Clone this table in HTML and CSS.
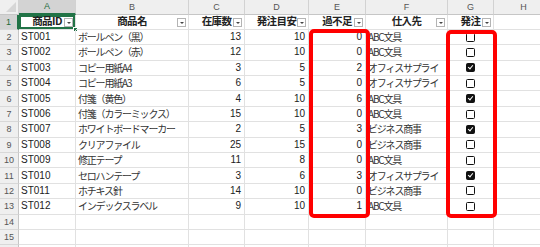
FILE: index.html
```html
<!DOCTYPE html>
<html lang="ja">
<head>
<meta charset="utf-8">
<title>在庫表</title>
<link rel="stylesheet" href="styles.css">
</head>
<body>
<div class="wrap">
  <div class="sheet">
    <div class="ch corner"><span class="tri"></span></div>
    <div class="ch sel">A</div><div class="ch">B</div><div class="ch">C</div><div class="ch">D</div><div class="ch">E</div><div class="ch">F</div><div class="ch">G</div><div class="ch">H</div>

    <div class="rh sel">1</div>
    <div class="c hd active">商品ID<span class="fb"></span></div>
    <div class="c hd">商品名<span class="fb"></span></div>
    <div class="c hd">在庫数<span class="fb"></span></div>
    <div class="c hd">発注目安<span class="fb"></span></div>
    <div class="c hd">過不足<span class="fb"></span></div>
    <div class="c hd">仕入先<span class="fb"></span></div>
    <div class="c hd">発注<span class="fb"></span></div>
    <div class="c"></div>

    <div class="rh">2</div><div class="c">ST001</div><div class="c jp">ボールペン（黒）</div><div class="c n">13</div><div class="c n">10</div><div class="c n">0</div><div class="c jp">ABC文具</div><div class="c cb"><span class="box"></span></div><div class="c"></div>
    <div class="rh">3</div><div class="c">ST002</div><div class="c jp">ボールペン（赤）</div><div class="c n">12</div><div class="c n">10</div><div class="c n">0</div><div class="c jp">ABC文具</div><div class="c cb"><span class="box"></span></div><div class="c"></div>
    <div class="rh">4</div><div class="c">ST003</div><div class="c jp">コピー用紙A4</div><div class="c n">3</div><div class="c n">5</div><div class="c n">2</div><div class="c jp">オフィスサプライ</div><div class="c cb"><span class="box on"></span></div><div class="c"></div>
    <div class="rh">5</div><div class="c">ST004</div><div class="c jp">コピー用紙A3</div><div class="c n">6</div><div class="c n">5</div><div class="c n">0</div><div class="c jp">オフィスサプライ</div><div class="c cb"><span class="box"></span></div><div class="c"></div>
    <div class="rh">6</div><div class="c">ST005</div><div class="c jp">付箋（黄色）</div><div class="c n">4</div><div class="c n">10</div><div class="c n">6</div><div class="c jp">ABC文具</div><div class="c cb"><span class="box on"></span></div><div class="c"></div>
    <div class="rh">7</div><div class="c">ST006</div><div class="c jp">付箋（カラーミックス）</div><div class="c n">15</div><div class="c n">10</div><div class="c n">0</div><div class="c jp">ABC文具</div><div class="c cb"><span class="box"></span></div><div class="c"></div>
    <div class="rh">8</div><div class="c">ST007</div><div class="c jp">ホワイトボードマーカー</div><div class="c n">2</div><div class="c n">5</div><div class="c n">3</div><div class="c jp">ビジネス商事</div><div class="c cb"><span class="box on"></span></div><div class="c"></div>
    <div class="rh">9</div><div class="c">ST008</div><div class="c jp">クリアファイル</div><div class="c n">25</div><div class="c n">15</div><div class="c n">0</div><div class="c jp">ビジネス商事</div><div class="c cb"><span class="box"></span></div><div class="c"></div>
    <div class="rh">10</div><div class="c">ST009</div><div class="c jp">修正テープ</div><div class="c n">11</div><div class="c n">8</div><div class="c n">0</div><div class="c jp">ABC文具</div><div class="c cb"><span class="box"></span></div><div class="c"></div>
    <div class="rh">11</div><div class="c">ST010</div><div class="c jp">セロハンテープ</div><div class="c n">3</div><div class="c n">6</div><div class="c n">3</div><div class="c jp">オフィスサプライ</div><div class="c cb"><span class="box on"></span></div><div class="c"></div>
    <div class="rh">12</div><div class="c">ST011</div><div class="c jp">ホチキス針</div><div class="c n">14</div><div class="c n">10</div><div class="c n">0</div><div class="c jp">ビジネス商事</div><div class="c cb"><span class="box"></span></div><div class="c"></div>
    <div class="rh">13</div><div class="c">ST012</div><div class="c jp">インデックスラベル</div><div class="c n">9</div><div class="c n">10</div><div class="c n">1</div><div class="c jp">ABC文具</div><div class="c cb"><span class="box"></span></div><div class="c"></div>
    <div class="rh">14</div><div class="c"></div><div class="c"></div><div class="c"></div><div class="c"></div><div class="c"></div><div class="c"></div><div class="c"></div><div class="c"></div>
    <div class="rh">15</div><div class="c"></div><div class="c"></div><div class="c"></div><div class="c"></div><div class="c"></div><div class="c"></div><div class="c"></div><div class="c"></div>
    <div class="rh"></div><div class="c"></div><div class="c"></div><div class="c"></div><div class="c"></div><div class="c"></div><div class="c"></div><div class="c"></div><div class="c"></div>
  </div>
  <div class="mark mark-e"></div>
  <div class="mark mark-g"></div>
</div>
</body>
</html>
```
FILE: styles.css
```css
html, body {
  margin: 0;
  padding: 0;
  background: #ffffff;
  overflow: hidden;
}
.wrap {
  position: relative;
  width: 540px;
  height: 247px;
  overflow: hidden;
}
.sheet {
  display: grid;
  grid-template-columns: 19px 57px 113px 56px 64px 57px 82px 46px 60px;
  grid-template-rows: 14.5px;
  grid-auto-rows: 15.4px;
  font-family: "Liberation Sans", "Noto Sans CJK JP", sans-serif;
  font-size: 10px;
  color: #222222;
}
.ch {
  background: #efefef;
  border-right: 1px solid #d2d2d2;
  border-bottom: 1px solid #c6c6c6;
  color: #555555;
  font-size: 9px;
  display: flex;
  align-items: center;
  justify-content: center;
  box-sizing: border-box;
}
.ch.sel {
  background: #d3d3d3;
  color: #1f6b3c;
  border-bottom: 2px solid #217346;
}
.corner {
  position: relative;
}
.tri {
  position: absolute;
  right: 2px;
  bottom: 2px;
  width: 0;
  height: 0;
  border-left: 10px solid transparent;
  border-bottom: 10px solid #d6d6d6;
}
.rh {
  background: #efefef;
  border-right: 1px solid #c6c6c6;
  border-bottom: 1px solid #d8d8d8;
  color: #555555;
  font-size: 9px;
  display: flex;
  align-items: center;
  justify-content: center;
  box-sizing: border-box;
}
.rh.sel {
  background: #d3d3d3;
  color: #1f6b3c;
  border-right: 2px solid #217346;
}
.c {
  position: relative;
  border-right: 1px solid #e1e1e1;
  border-bottom: 1px solid #e1e1e1;
  box-sizing: border-box;
  display: flex;
  align-items: center;
  padding: 0 2px;
  white-space: nowrap;
  overflow: visible;
  line-height: 1;
}
.jp {
  font-family: "Noto Sans CJK JP", sans-serif;
  letter-spacing: -1.2px;
  color: #333333;
}
.n {
  justify-content: flex-end;
  padding-right: 3px;
}
.hd {
  justify-content: center;
  font-family: "Noto Sans CJK JP", sans-serif;
  font-weight: bold;
  font-size: 10.5px;
  color: #222222;
  letter-spacing: -0.6px;
}
.active {
  box-shadow: inset 0 0 0 2px #217346;
}
.active::after {
  content: "";
  position: absolute;
  right: -3px;
  bottom: -3px;
  width: 5px;
  height: 5px;
  background: #217346;
  border: 1px solid #ffffff;
  box-sizing: border-box;
}
.fb {
  position: absolute;
  right: 2px;
  top: 3px;
  width: 9px;
  height: 9px;
  box-sizing: border-box;
  border: 1px solid #b4b4b4;
  background: #ffffff;
}
.fb::after {
  content: "";
  position: absolute;
  left: 2px;
  top: 3px;
  border-left: 2px solid transparent;
  border-right: 2px solid transparent;
  border-top: 2px solid #444444;
}
.cb {
  justify-content: center;
}
.box {
  width: 9px;
  height: 9px;
  box-sizing: border-box;
  border: 1.5px solid #111111;
  border-radius: 1.5px;
  background: #ffffff;
  position: relative;
}
.box.on {
  background: #111111;
}
.box.on::after {
  content: "";
  position: absolute;
  left: 1.5px;
  top: 0px;
  width: 2px;
  height: 4px;
  border-right: 1.3px solid #ffffff;
  border-bottom: 1.3px solid #ffffff;
  transform: rotate(40deg);
}
.mark {
  position: absolute;
  border: 4px solid #ff0000;
  border-radius: 5px;
  box-sizing: border-box;
}
.mark-e {
  left: 309px;
  top: 29px;
  width: 61px;
  height: 189px;
}
.mark-g {
  left: 446px;
  top: 30px;
  width: 51px;
  height: 188px;
}
```
